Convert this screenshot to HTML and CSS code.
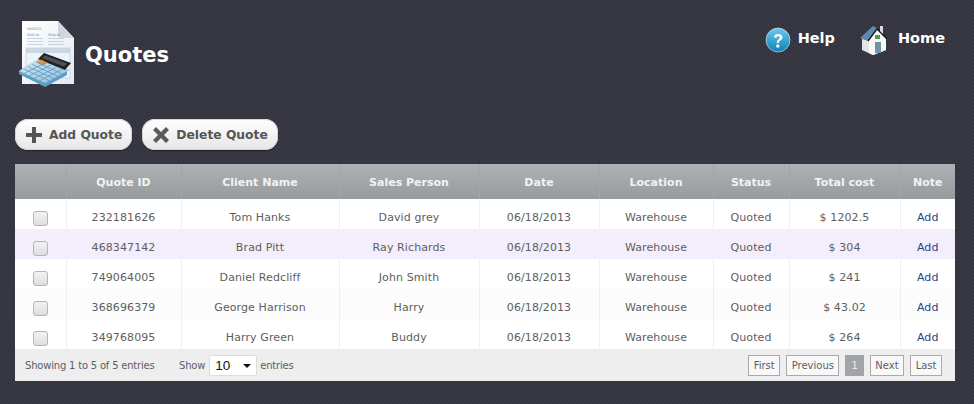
FILE: index.html
```html
<!DOCTYPE html>
<html lang="en">
<head>
<meta charset="utf-8">
<title>Quotes</title>
<link rel="stylesheet" href="styles.css">
</head>
<body>
<header class="top">
  <div class="brand">
    <svg class="brand-icon" width="58" height="68" viewBox="0 0 58 68">
      <defs>
        <linearGradient id="paper" x1="0" y1="0" x2="1" y2="1"><stop offset="0" stop-color="#ffffff"/><stop offset="1" stop-color="#e3e9f0"/></linearGradient>
        <linearGradient id="calc" x1="0" y1="0" x2="1" y2="1"><stop offset="0" stop-color="#d4ebf7"/><stop offset="1" stop-color="#8fc0de"/></linearGradient>
      </defs>
      <path d="M5 1H41L57 18V64H5Z" fill="url(#paper)"/>
      <path d="M41 1L57 18H44Q41 18 41 14Z" fill="#cfd8e0"/>
      <text x="10" y="10" class="tiny">INVOICE</text>
      <text x="10" y="16" class="tiny">Sold to</text>
      <text x="31" y="16" class="tiny">Ship to</text>
      <path d="M10 18.500H26M10 21.500H26M10 24.500H26M31 18.500H47M31 21.500H47M31 24.500H47" stroke="#c3d5e2" fill="none"/>
      <rect x="9" y="28" width="44" height="30" fill="#eef3f7" stroke="#b7c6d2" stroke-width="0.600"/>
      <rect x="9" y="28" width="44" height="5" fill="#c9d7e2"/>
      <path d="M2 51V54L28 67L50 55V51L28 62Z" fill="#5e9cc4"/>
      <path d="M2 51L24 38L52 50L28 63Z" fill="url(#calc)" stroke="#87b4cf" stroke-width="0.500"/>
      <path d="M27 33L54 43L48 50L21 39Z" fill="#1f2125"/>
      <path d="M28 35.500L50 43.500L47 46.500L25 38Z" fill="#4d5157"/>
      <path d="M19 42L24 39.500L31 43L26 45.500Z" fill="#d9964c"/>
      <path d="M7.200 53.400L29.200 42.400M12.400 55.800L34.400 44.800M17.600 58.200L39.600 47.200M22.800 60.600L44.800 49.600M6.400 48.800L32.400 60.800M10.800 46.600L36.800 58.600M15.200 44.400L41.200 56.400M19.600 42.200L45.600 54.200" stroke="#5f97bb" stroke-width="0.800" fill="none"/>
    </svg>
    <h1 class="title">Quotes</h1>
  </div>
  <nav class="links">
    <a class="link">
      <svg class="link-icon" width="26" height="26" viewBox="0 0 26 26">
        <defs>
          <linearGradient id="ball" x1="0" y1="0" x2="0" y2="1"><stop offset="0" stop-color="#6ccbf0"/><stop offset="1" stop-color="#0f7fb4"/></linearGradient>
        </defs>
        <circle cx="13" cy="13" r="12" fill="url(#ball)" stroke="#d8eef8" stroke-width="0.600"/>
        <path d="M9 10.500Q9 7 13 7Q17.500 7 17.500 10.500Q17.500 12.500 15 13.700Q13.800 14.300 13.800 16H11.700Q11.700 13.300 13.600 12.300Q14.800 11.600 14.800 10.600Q14.800 9.300 13 9.300Q11.500 9.300 11.500 10.800Z" fill="#fff"/>
        <circle cx="12.800" cy="19" r="1.700" fill="#fff"/>
      </svg>
      <span>Help</span>
    </a>
    <a class="link link-home">
      <svg class="link-icon" width="28" height="30" viewBox="0 0 28 30">
        <path d="M3 14L10 15L18 4L27 14V25L14 30L3 25Z" fill="#e4e4e2"/>
        <path d="M10 15L18 4L27 14V25L14 30L10 28Z" fill="#f8f8f6"/>
        <path d="M21 1H24V10L21 7Z" fill="#d8d8d6"/>
        <path d="M1 13L14 1L18 3L9 16Z" fill="#5f8ab0"/>
        <path d="M9 16L18 4L28 14" stroke="#15181c" stroke-width="1.300" fill="none"/>
        <rect x="16" y="10" width="5" height="4" fill="#4e9a52"/>
        <rect x="16" y="17" width="6" height="11" fill="#6f93a8"/>
      </svg>
      <span>Home</span>
    </a>
  </nav>
</header>

<div class="toolbar">
  <button class="btn" type="button">
    <svg width="16" height="16" viewBox="0 0 16 16"><path d="M6 0H10V6H16V10H10V16H6V10H0V6H6Z" fill="#555"/></svg>
    Add Quote
  </button>
  <button class="btn" type="button">
    <svg width="16" height="16" viewBox="0 0 16 16"><path d="M3 0L8 5L13 0L16 3L11 8L16 13L13 16L8 11L3 16L0 13L5 8L0 3Z" fill="#5a5a5a"/></svg>
    Delete Quote
  </button>
</div>

<main class="panel">
  <table class="grid">
    <colgroup>
      <col class="c1"><col class="c2"><col class="c3"><col class="c4"><col class="c5"><col class="c6"><col class="c7"><col class="c8"><col class="c9">
    </colgroup>
    <thead>
      <tr><th></th><th>Quote ID</th><th>Client Name</th><th>Sales Person</th><th>Date</th><th>Location</th><th>Status</th><th>Total cost</th><th>Note</th></tr>
    </thead>
    <tbody>
      <tr><td><span class="check"></span></td><td>232181626</td><td>Tom Hanks</td><td>David grey</td><td>06/18/2013</td><td>Warehouse</td><td>Quoted</td><td>$ 1202.5</td><td><a class="add">Add</a></td></tr>
      <tr class="hot"><td><span class="check"></span></td><td>468347142</td><td>Brad Pitt</td><td>Ray Richards</td><td>06/18/2013</td><td>Warehouse</td><td>Quoted</td><td>$ 304</td><td><a class="add">Add</a></td></tr>
      <tr><td><span class="check"></span></td><td>749064005</td><td>Daniel Redcliff</td><td>John Smith</td><td>06/18/2013</td><td>Warehouse</td><td>Quoted</td><td>$ 241</td><td><a class="add">Add</a></td></tr>
      <tr class="soft"><td><span class="check"></span></td><td>368696379</td><td>George Harrison</td><td>Harry</td><td>06/18/2013</td><td>Warehouse</td><td>Quoted</td><td>$ 43.02</td><td><a class="add">Add</a></td></tr>
      <tr><td><span class="check"></span></td><td>349768095</td><td>Harry Green</td><td>Buddy</td><td>06/18/2013</td><td>Warehouse</td><td>Quoted</td><td>$ 264</td><td><a class="add">Add</a></td></tr>
    </tbody>
  </table>
  <footer class="foot">
    <div class="info">
      <span class="count">Showing 1 to 5 of 5 entries</span>
      <span class="show">Show</span>
      <span class="select">10<i class="caret"></i></span>
      <span>entries</span>
    </div>
    <div class="pages">
      <a class="page">First</a>
      <a class="page">Previous</a>
      <a class="page current">1</a>
      <a class="page">Next</a>
      <a class="page">Last</a>
    </div>
  </footer>
</main>
</body>
</html>
```
FILE: styles.css
```css
* { box-sizing: border-box; }
html, body { height: 100%; }
body {
  margin: 0;
  overflow: hidden;
  font-family: "DejaVu Sans", Verdana, sans-serif;
  background-color: #3a3b46;
  background-image: linear-gradient(45deg, #31323b 25%, transparent 25% 50%, #31323b 50% 75%, transparent 75%);
  background-size: 4px 4px;
}
.top {
  display: flex;
  justify-content: space-between;
  height: 119px;
  padding: 20px 29px 0 17px;
}
.brand { display: flex; align-items: flex-start; gap: 10px; }
.brand-icon { display: block; }
.tiny { font-size: 3.500px; fill: #7d8a96; }
.title {
  margin: 19px 0 0;
  color: #fff;
  font-size: 21px;
  line-height: 32px;
  font-weight: 700;
}
.links { display: flex; align-items: flex-start; gap: 24px; margin-top: 3px; }
.link {
  display: flex;
  align-items: center;
  gap: 7px;
  height: 30px;
  color: #fff;
  font-size: 14.500px;
  font-weight: 700;
}
.link-icon { margin-top: 3px; }
.link-home { gap: 11px; }
.toolbar { display: flex; gap: 10px; padding-left: 15px; height: 45px; }
.btn {
  display: flex;
  align-items: center;
  gap: 7px;
  height: 31px;
  padding: 0 10px 0 11px;
  border: 0;
  border-radius: 13px;
  background: linear-gradient(#ffffff, #e6e6e6);
  box-shadow: inset 0 0 0 1px #d4d4d4, 0 1px 1px rgba(0,0,0,.4);
  color: #555;
  font-family: inherit;
  font-size: 12.300px;
  font-weight: 700;
}
.panel { width: 940px; margin-left: 15px; }
.grid {
  width: 940px;
  table-layout: fixed;
  border-collapse: collapse;
  font-size: 11px;
  letter-spacing: .1px;
  color: #5e5e5e;
}
.c1 { width: 51px; }
.c2 { width: 115px; }
.c3 { width: 158px; }
.c4 { width: 140px; }
.c5 { width: 120px; }
.c6 { width: 114px; }
.c7 { width: 76px; }
.c8 { width: 111px; }
.c9 { width: 55px; }
.grid th {
  height: 35px;
  padding: 1px 0 0;
  background: linear-gradient(#adb1b3, #979b9d);
  border-left: 1px solid #a2a6a8;
  color: #f2f2f2;
  font-size: 11px;
  font-weight: 700;
  letter-spacing: 0;
}
.grid th:first-child, .grid td:first-child { border-left: 0; }
.grid td {
  height: 30px;
  padding: 7px 0 0;
  text-align: center;
  background: #fff;
  border-left: 1px solid #efefef;
}
.grid .hot td { background: #f3edfc; border-left-color: #f3edfc; }
.grid .soft td { background: #fcfcfc; }
.check {
  display: block;
  width: 15px;
  height: 15px;
  margin: 2px 0 0 18px;
  border: 1px solid #b5b5b5;
  border-radius: 3px;
  background: linear-gradient(#f2f2f2, #dedede);
}
.add { color: #2f3f7f; }
.foot {
  display: flex;
  justify-content: space-between;
  align-items: center;
  height: 32px;
  padding: 0 13px 0 10px;
  background: #eeeeee;
  font-size: 10px;
  color: #5e5e5e;
}
.info { display: flex; align-items: center; letter-spacing: -.2px; }
.count { width: 154px; }
.show { margin-right: 4px; }
.select {
  position: relative;
  width: 48px;
  height: 21px;
  margin-right: 3px;
  padding: 0 0 0 5px;
  background: #fff;
  border: 1px solid #ddd;
  border-radius: 2px;
  color: #111;
  font-family: "Liberation Sans", Arial, sans-serif;
  font-size: 13.500px;
  letter-spacing: 0;
  line-height: 19px;
}
.caret {
  position: absolute;
  right: 5px;
  top: 8px;
  border: 4px solid transparent;
  border-top: 4px solid #111;
  border-bottom: 0;
}
.pages { display: flex; gap: 6px; }
.page {
  height: 21px;
  padding: 0 4.500px;
  border: 1px solid #aaa;
  background: #f8f8f8;
  line-height: 19px;
  color: #5e5e5e;
}
.page.current {
  padding: 0 5px;
  background: #a2a4a6;
  border-color: #a2a4a6;
  color: #eee;
}
```
